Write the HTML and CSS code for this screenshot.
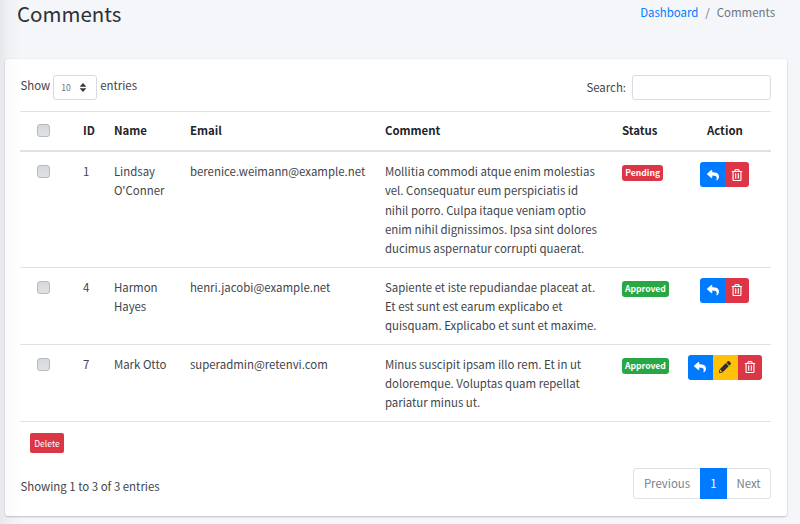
FILE: index.html
```html
<!DOCTYPE html>
<html lang="en">
<head>
<meta charset="utf-8">
<title>Comments</title>
<link rel="stylesheet" href="styles.css">
</head>
<body>
<svg class="defs" width="0" height="0">
  <symbol id="reply" viewBox="0 0 512 512"><path fill="currentColor" d="M8 196 184 44c15-13 40-2 40 18v80c161 2 288 34 288 186 0 61-39 122-83 153-13 10-33-2-28-18 45-144-22-183-177-185v88c0 20-25 31-40 18L8 232c-11-10-11-26 0-36z"/></symbol>
  <symbol id="trash" viewBox="0 0 448 512"><path fill="currentColor" d="M268 416h24a12 12 0 0 0 12-12V188a12 12 0 0 0-12-12h-24a12 12 0 0 0-12 12v216a12 12 0 0 0 12 12zM432 80h-82l-34-57A48 48 0 0 0 275 0H173a48 48 0 0 0-41 23L98 80H16A16 16 0 0 0 0 96v16a16 16 0 0 0 16 16h16v336a48 48 0 0 0 48 48h288a48 48 0 0 0 48-48V128h16a16 16 0 0 0 16-16V96a16 16 0 0 0-16-16zM172 51a6 6 0 0 1 5-3h94a6 6 0 0 1 5 3l18 29H154zM368 464H80V128h288zM156 416h24a12 12 0 0 0 12-12V188a12 12 0 0 0-12-12h-24a12 12 0 0 0-12 12v216a12 12 0 0 0 12 12z"/></symbol>
  <symbol id="pencil" viewBox="0 0 512 512"><path fill="currentColor" d="M498 142l-47 46c-5 5-12 5-17 0L324 78c-5-5-5-12 0-17l46-47c19-19 49-19 68 0l60 60c19 19 19 49 0 68zM284 100 22 362 0 484c-3 16 12 31 28 28l122-21 262-263c5-5 5-12 0-17L301 100c-5-5-12-5-17 0zM88 424h48v36l-64 12-32-32 12-64h36z"/></symbol>
</svg>
<header class="page-header">
  <h1>Comments</h1>
  <nav class="breadcrumb"><a>Dashboard</a><span>/</span><span>Comments</span></nav>
</header>
<main class="card">
  <div class="toolbar">
    <div class="length">Show <span class="select">10<svg width="8" height="9" viewBox="0 0 8 9"><path fill="#343a40" d="M4 0 7.4 3.7H.6zM4 9 .6 5.3h6.8z"/></svg></span> entries</div>
    <label class="search">Search:<input type="text"></label>
  </div>
  <table>
    <colgroup><col class="c-check"><col class="c-id"><col class="c-name"><col class="c-email"><col class="c-comment"><col class="c-status"><col class="c-action"></colgroup>
    <thead><tr><th><i class="check"></i></th><th>ID</th><th>Name</th><th>Email</th><th>Comment</th><th>Status</th><th class="action">Action</th></tr></thead>
    <tbody>
      <tr class="tall"><td><i class="check"></i></td><td>1</td><td>Lindsay<br>O'Conner</td><td>berenice.weimann@example.net</td>
        <td>Mollitia commodi atque enim molestias<br>vel. Consequatur eum perspiciatis id<br>nihil porro. Culpa itaque veniam optio<br>enim nihil dignissimos. Ipsa sint dolores<br>ducimus aspernatur corrupti quaerat.</td>
        <td><span class="badge red">Pending</span></td>
        <td class="action"><div class="btns"><b class="blue"><svg><use href="#reply"/></svg></b><b class="red"><svg><use href="#trash"/></svg></b></div></td></tr>
      <tr><td><i class="check"></i></td><td>4</td><td>Harmon<br>Hayes</td><td>henri.jacobi@example.net</td>
        <td>Sapiente et iste repudiandae placeat at.<br>Et est sunt est earum explicabo et<br>quisquam. Explicabo et sunt et maxime.</td>
        <td><span class="badge green">Approved</span></td>
        <td class="action"><div class="btns"><b class="blue"><svg><use href="#reply"/></svg></b><b class="red"><svg><use href="#trash"/></svg></b></div></td></tr>
      <tr><td><i class="check"></i></td><td>7</td><td>Mark Otto</td><td>superadmin@retenvi.com</td>
        <td>Minus suscipit ipsam illo rem. Et in ut<br>doloremque. Voluptas quam repellat<br>pariatur minus ut.</td>
        <td><span class="badge green">Approved</span></td>
        <td class="action"><div class="btns"><b class="blue"><svg><use href="#reply"/></svg></b><b class="yellow"><svg><use href="#pencil"/></svg></b><b class="red"><svg><use href="#trash"/></svg></b></div></td></tr>
    </tbody>
  </table>
  <button class="delete">Delete</button>
  <footer class="foot">
    <div>Showing 1 to 3 of 3 entries</div>
    <div class="pager"><span class="prev">Previous</span><span class="current">1</span><span class="next">Next</span></div>
  </footer>
</main>
</body>
</html>
```
FILE: styles.css
```css
* { box-sizing: border-box; }
body {
  margin: 0;
  height: 524px;
  overflow: hidden;
  background: linear-gradient(90deg, #e6e8ec 0, #eef0f4 8px, #f4f6f9 22px);
  color: #414549;
  font: 11.43px/19.25px "Noto Sans CJK JP", "Noto Sans", sans-serif;
}
.defs { display: block; }
.page-header {
  height: 59px;
  padding: 0 25px 0 17px;
  display: flex;
  justify-content: space-between;
}
h1 { margin: 0; font-size: 20.5px; line-height: 27px; font-weight: 400; color: #2c3136; }
.breadcrumb { display: flex; gap: 7px; padding-top: 3px; color: #6c757d; }
.breadcrumb a { color: #007bff; }
.card {
  width: 782px;
  height: 457px;
  margin-left: 5px;
  padding: 16px 16px 0 15.4px;
  border-radius: 3px;
  background: linear-gradient(90deg, #fafafb, #fff 16px);
  box-shadow: 0 0 1px rgba(0,0,0,.14), 0 1px 2px rgba(0,0,0,.22);
}
.toolbar { height: 36px; display: flex; justify-content: space-between; align-items: flex-start; }
.length { display: flex; gap: 3px; line-height: 21px; }
.select {
  width: 44px;
  height: 25px;
  padding: 0 9px 0 7px;
  display: flex;
  align-items: center;
  justify-content: space-between;
  border: 1px solid #d5dae0;
  border-radius: 3px;
  background: #fff;
  color: #6c757d;
  font-size: 8.6px;
}
.search { display: flex; gap: 6px; line-height: 24px; }
.search input {
  width: 139px;
  height: 25px;
  padding: 0 6px;
  border: 1px solid #d9dde1;
  border-radius: 3px;
  background: #fff;
}
table { width: 751px; table-layout: fixed; border-collapse: separate; border-spacing: 0; }
.c-check { width: 53px; }
.c-id { width: 31px; }
.c-name { width: 76px; }
.c-email { width: 195px; }
.c-comment { width: 237px; }
.c-status { width: 66px; }
.c-action { width: 93px; }
th, td { padding: 10px 0 0 9.5px; border-top: 1px solid #dee2e6; vertical-align: top; text-align: left; white-space: nowrap; }
th { height: 41px; padding-top: 9px; border-bottom: 2px solid #dee2e6; color: #212529; }
td { height: 77px; }
.tall td { height: 115px; border-top: 0; padding-top: 10px; }
tbody tr:not(.tall) td { padding-top: 9.5px; }
tbody tr:last-child td { height: 78px; border-bottom: 1px solid #dee2e6; }
.check {
  display: block;
  width: 13px;
  height: 13px;
  margin: 3px 0 0 7px;
  border: 1px solid #b4bac0;
  border-radius: 3px;
  background: linear-gradient(#d4d8dc, #dfe2e5);
}
th.action, td.action { padding-left: 0; text-align: center; }
.badge {
  display: block;
  width: 41.5px;
  height: 16px;
  margin-top: 3px;
  border-radius: 3px;
  color: #fff;
  font-size: 8.6px;
  font-weight: 700;
  line-height: 15px;
  text-align: center;
}
.badge.green { width: 47px; }
.red { background: #dc3545; }
.green { background: #28a745; }
.blue { background: #007bff; }
.yellow { background: #ffc107; }
.btns { display: inline-flex; border-radius: 3px; overflow: hidden; vertical-align: top; }
.btns b { width: 25px; height: 25px; display: flex; align-items: center; justify-content: center; color: #fff; }
.btns b.red { width: 24px; }
.btns b.yellow { color: #2c3034; }
.btns svg { width: 12px; height: 12px; }
.delete {
  display: block;
  width: 34px;
  height: 20px;
  margin: 11px 0 0 9.6px;
  padding: 0;
  border: 0;
  border-radius: 2px;
  background: #dc3545;
  color: #fff;
  font: 8.6px/18px "Noto Sans CJK JP", "Noto Sans", sans-serif;
}
.foot { display: flex; justify-content: space-between; margin-top: 15px; line-height: 37px; }
.pager { display: flex; width: 138px; height: 31px; border: 1px solid #dee2e6; border-radius: 3px; line-height: 29px; color: #7a828a; text-align: center; }
.prev { width: 66px; }
.current { width: 27px; height: 31px; margin-top: -1px; background: #007bff; color: #fff; line-height: 31px; }
.next { flex: 1; }
```
